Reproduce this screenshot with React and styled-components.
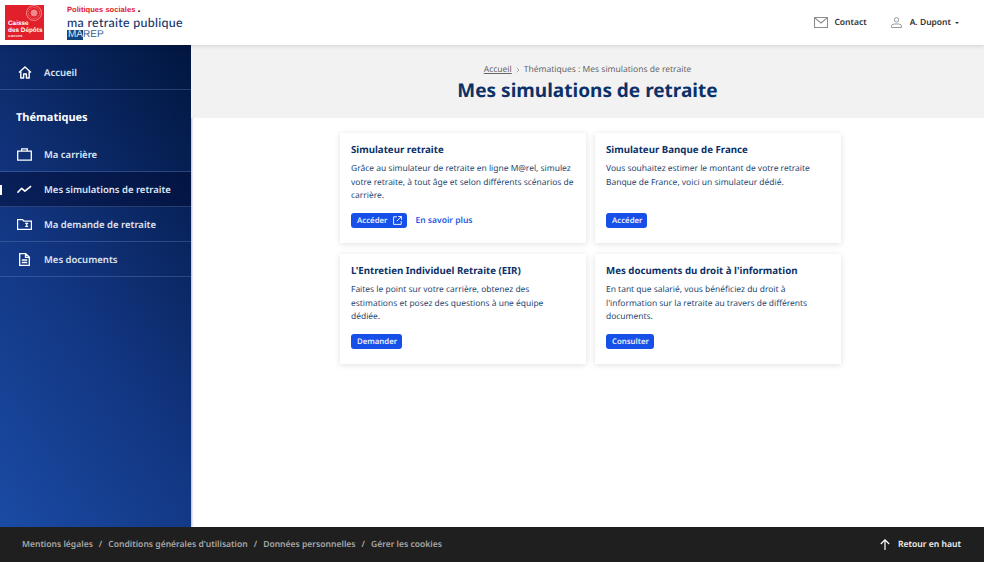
import React from "react"
import styled, { createGlobalStyle } from "styled-components"
import { ChevronRight } from "lucide-react"

const GlobalStyle = createGlobalStyle`
  html, body { margin: 0; padding: 0; height: 100%; background: #fff; }
  body { font-family: "Noto Sans", "Open Sans", sans-serif; overflow: hidden; text-rendering: geometricPrecision; }
  #root { height: 100%; }
  * { box-sizing: border-box; }
  a { text-decoration: none; }
`

const Page = styled.div`
  display: flex;
  flex-direction: column;
  height: 562px;
`

const Header = styled.header`
  position: relative;
  z-index: 2;
  display: flex;
  align-items: center;
  justify-content: space-between;
  flex: 0 0 45px;
  padding: 0 25px 0 5px;
  background: #fff;
  box-shadow: 0 1px 4px rgba(0, 0, 0, 0.14);
`

const Brand = styled.div`
  display: flex;
  align-items: center;
  gap: 23px;
`

const Logo = styled.div`
  display: flex;
  flex-direction: column;
  justify-content: flex-end;
  position: relative;
  overflow: hidden;
  width: 39px;
  height: 35px;
  padding: 0 0 2px 3px;
  background: #e2202c;
  color: #fff;
  font-family: "Liberation Sans", Arial, sans-serif;
  font-size: 6.4px;
  font-weight: 700;
  line-height: 6.4px;
`

const LogoSmall = styled.span`
  font-size: 3px;
  line-height: 4px;
  letter-spacing: 0.3px;
`

const Seal = styled.svg`
  position: absolute;
  top: 0;
  right: 0;
`

const BrandText = styled.div`
  display: flex;
  flex-direction: column;
`

const Tagline = styled.div`
  color: #e2202c;
  font-family: "Liberation Sans", Arial, sans-serif;
  font-size: 7.6px;
  font-weight: 700;
  line-height: 9px;
  &::after { content: "."; color: #111; font-size: 11px; line-height: 0; }
`

const BrandName = styled.div`
  color: #12366b;
  font-family: "Lato", sans-serif;
  font-size: 12.4px;
  font-weight: 500;
  letter-spacing: 0.3px;
  line-height: 15px;
  margin-top: 1px;
`

const Marep = styled.div`
  display: flex;
  color: #3a5c8c;
  font-family: "Liberation Sans", Arial, sans-serif;
  font-size: 10px;
  line-height: 10px;
`

const MarepBox = styled.span`
  background: #12457f;
  color: #dfe8f2;
  padding-left: 1px;
`

const HeaderActions = styled.nav`
  display: flex;
  align-items: center;
  gap: 24px;
`

const HeaderAction = styled.a`
  display: flex;
  align-items: center;
  gap: ${(p) => p.$gap}px;
  color: #333;
  font-size: 8.5px;
  font-weight: 600;
`

const Caret = styled.span`
  width: 0;
  height: 0;
  margin-left: -4px;
  border-left: 2.5px solid transparent;
  border-right: 2.5px solid transparent;
  border-top: 2.5px solid #333;
`

const Body = styled.div`
  display: flex;
  flex: 1;
  min-height: 0;
`

const Sidebar = styled.aside`
  flex: 0 0 191px;
  background: linear-gradient(55deg, #1a4ba4 0%, #123580 45%, #01163f 100%);
  box-shadow: 1px 0 2px rgba(20, 50, 120, 0.35);
`

const NavItem = styled.a`
  position: relative;
  display: flex;
  align-items: center;
  height: 35px;
  padding: 1px 0 0 17px;
  gap: 12px;
  color: #dfe5f2;
  font-size: 9.5px;
  font-weight: 600;
  border-bottom: 1px solid rgba(130, 160, 215, 0.28);
  background: ${(p) => (p.$active ? "rgba(0, 10, 50, 0.5)" : "transparent")};
  &::before {
    content: "";
    display: ${(p) => (p.$active ? "block" : "none")};
    position: absolute;
    left: 0;
    top: 13px;
    width: 2px;
    height: 10px;
    background: #fff;
  }
`

const HomeItem = styled(NavItem)`
  height: 45px;
  padding-top: 10px;
`

const NavIcon = styled.span`
  display: flex;
  justify-content: center;
  width: 15px;
`

const SectionTitle = styled.div`
  display: flex;
  align-items: center;
  height: 47px;
  padding: 8px 0 0 16px;
  color: #fff;
  font-size: 11px;
  font-weight: 700;
`

const Main = styled.main`
  display: flex;
  flex: 1;
  flex-direction: column;
  min-width: 0;
`

const Hero = styled.div`
  display: flex;
  flex-direction: column;
  align-items: center;
  flex: 0 0 73px;
  padding-top: 19px;
  background: #f2f2f2;
`

const Breadcrumb = styled.div`
  display: flex;
  align-items: center;
  gap: 2px;
  color: #666;
  font-size: 8.5px;
  line-height: 12px;
  a { color: #666; text-decoration: underline; }
`

const Title = styled.h1`
  margin: 1px 0 0;
  color: #0b3168;
  font-size: 19px;
  font-weight: 700;
  line-height: 27px;
`

const CardGrid = styled.section`
  display: grid;
  grid-template-columns: 246px 246px;
  grid-auto-rows: 110px;
  gap: 11px 9px;
  justify-content: center;
  padding: 15px 0 0 6px;
`

const Card = styled.article`
  display: flex;
  flex-direction: column;
  padding: 9px 12px 0 11px;
  background: #fff;
  box-shadow: 0 1px 6px rgba(0, 0, 0, 0.13);
`

const CardTitle = styled.h2`
  margin: 0;
  color: #0b3168;
  font-size: 9.7px;
  font-weight: 700;
  line-height: 16px;
`

const CardText = styled.p`
  flex: 0 0 41px;
  margin: 4px 0 0;
  color: #25466f;
  font-size: 8.45px;
  line-height: 13.7px;
`

const Actions = styled.div`
  display: flex;
  align-items: center;
  gap: 8px;
  margin-top: 10px;
`

const Button = styled.a`
  display: flex;
  align-items: center;
  gap: 6px;
  height: 15px;
  padding: 0 5px 0 6px;
  border-radius: 3px;
  background: #1750e8;
  color: #e8eefc;
  font-size: 7.8px;
  font-weight: 600;
`

const TextLink = styled.a`
  color: #1f5be0;
  font-size: 8.5px;
  font-weight: 600;
`

const Footer = styled.footer`
  display: flex;
  align-items: center;
  justify-content: space-between;
  flex: 0 0 35px;
  padding: 0 23px 1px 22px;
  background: #1f1f1f;
`

const FooterLinks = styled.div`
  display: flex;
  gap: 6px;
  color: #a8a8a8;
  font-size: 8.55px;
  font-weight: 600;
`

const BackToTop = styled.a`
  display: flex;
  align-items: center;
  gap: 8px;
  color: #f2f2f2;
  font-size: 8.6px;
  font-weight: 600;
`

const HomeIcon = () => (
  <svg width="14" height="13" viewBox="0 0 14 13" fill="none" stroke="#fff" strokeWidth="1.4" strokeLinejoin="round">
    <path d="M1 6.5 7 1l6 5.5M2.8 5.5V12h2.8V8h2.8v4h2.8V5.5" />
  </svg>
)

const BriefcaseIcon = () => (
  <svg width="15" height="13" viewBox="0 0 15 13" fill="none" stroke="#fff" strokeWidth="1.3">
    <path d="M.7 3.2h13.6v9H.7zM4.7 3V.9h5.6V3" />
  </svg>
)

const TrendIcon = () => (
  <svg width="16" height="9" viewBox="0 0 16 9" fill="none" stroke="#fff" strokeWidth="1.7" strokeLinejoin="round">
    <path d="M.5 7.8 5 3.2l3.4 3L15 1" />
  </svg>
)

const FolderIcon = () => (
  <svg width="15" height="11" viewBox="0 0 15 11" fill="none" stroke="#fff" strokeWidth="1.2">
    <path d="M.6.6h5l1.3 1.5h7.5v8.3H.6zM8.2 4.4h3M9.7 4.4v2.8M8.2 7.4h3" />
  </svg>
)

const DocIcon = () => (
  <svg width="11" height="13" viewBox="0 0 11 13" fill="none" stroke="#fff" strokeWidth="1.3">
    <path d="M.7.7h6l3.6 3.4v8.2H.7zM6.5.8v3.5h3.7M2.8 7h5.4M2.8 9.5h5.4" />
  </svg>
)

const MailIcon = () => (
  <svg width="14" height="11" viewBox="0 0 14 11" fill="none" stroke="#8c8c8c" strokeWidth="1.1">
    <path d="M.5.5h13v10H.5zM.8.8 7 6l6.2-5.2" />
  </svg>
)

const UserIcon = () => (
  <svg width="11" height="11" viewBox="0 0 11 11" fill="none" stroke="#8c8c8c" strokeWidth="0.9">
    <circle cx="5.5" cy="2.8" r="2.2" />
    <path d="M.6 10.5V8.6c0-1 1.8-1.7 4.9-1.7s4.9.7 4.9 1.7v1.9z" />
  </svg>
)

const ExternalIcon = () => (
  <svg width="9" height="9" viewBox="0 0 9 9" fill="none" stroke="#fff" strokeWidth="0.9">
    <path d="M4 .8H.6v7.6h7.6V5M5.2.5h3.3v3.3M8.3.7 3.8 5.2" />
  </svg>
)

const ArrowUpIcon = () => (
  <svg width="10" height="11" viewBox="0 0 10 11" fill="none" stroke="#fff" strokeWidth="1.2">
    <path d="M5 11V1M.8 5 5 .8 9.2 5" />
  </svg>
)

const navItems = [
  { label: "Ma carrière", icon: <BriefcaseIcon /> },
  { label: "Mes simulations de retraite", icon: <TrendIcon />, active: true },
  { label: "Ma demande de retraite", icon: <FolderIcon /> },
  { label: "Mes documents", icon: <DocIcon /> },
]

const cards = [
  {
    title: "Simulateur retraite",
    text: "Grâce au simulateur de retraite en ligne M@rel, simulez votre retraite, à tout âge et selon différents scénarios de carrière.",
    action: "Accéder",
    external: true,
    more: "En savoir plus",
  },
  {
    title: "Simulateur Banque de France",
    text: "Vous souhaitez estimer le montant de votre retraite Banque de France, voici un simulateur dédié.",
    action: "Accéder",
  },
  {
    title: "L'Entretien Individuel Retraite (EIR)",
    text: "Faites le point sur votre carrière, obtenez des estimations et posez des questions à une équipe dédiée.",
    action: "Demander",
  },
  {
    title: "Mes documents du droit à l'information",
    text: "En tant que salarié, vous bénéficiez du droit à l'information sur la retraite au travers de différents documents.",
    action: "Consulter",
  },
]

const footerLinks = [
  "Mentions légales",
  "/",
  "Conditions générales d'utilisation",
  "/",
  "Données personnelles",
  "/",
  "Gérer les cookies",
]

export default function App() {
  return (
    <Page>
      <GlobalStyle />
      <Header>
        <Brand>
          <Logo>
            <Seal width="24" height="20" viewBox="0 0 24 20" fill="none" stroke="#f08a8a" strokeWidth="1">
              <circle cx="14" cy="8" r="7.5" />
              <circle cx="14" cy="8" r="5.5" strokeDasharray="1 1" />
              <circle cx="14" cy="8" r="3" fill="#f08a8a" />
            </Seal>
            <span>Caisse</span>
            <span>des Dépôts</span>
            <LogoSmall>GROUPE</LogoSmall>
          </Logo>
          <BrandText>
            <Tagline>Politiques sociales </Tagline>
            <BrandName>ma retraite publique</BrandName>
            <Marep>
              <MarepBox>MA</MarepBox>
              <span>REP</span>
            </Marep>
          </BrandText>
        </Brand>
        <HeaderActions>
          <HeaderAction $gap={6}>
            <MailIcon />
            Contact
          </HeaderAction>
          <HeaderAction $gap={8}>
            <UserIcon />
            A. Dupont
            <Caret />
          </HeaderAction>
        </HeaderActions>
      </Header>
      <Body>
        <Sidebar>
          <HomeItem>
            <NavIcon>
              <HomeIcon />
            </NavIcon>
            Accueil
          </HomeItem>
          <SectionTitle>Thématiques</SectionTitle>
          {navItems.map((item) => (
            <NavItem key={item.label} $active={item.active}>
              <NavIcon>{item.icon}</NavIcon>
              {item.label}
            </NavItem>
          ))}
        </Sidebar>
        <Main>
          <Hero>
            <Breadcrumb>
              <a>Accueil</a>
              <ChevronRight size={8} strokeWidth={1.5} />
              <span>Thématiques : Mes simulations de retraite</span>
            </Breadcrumb>
            <Title>Mes simulations de retraite</Title>
          </Hero>
          <CardGrid>
            {cards.map((card) => (
              <Card key={card.title}>
                <CardTitle>{card.title}</CardTitle>
                <CardText>{card.text}</CardText>
                <Actions>
                  <Button>
                    {card.action}
                    {card.external && <ExternalIcon />}
                  </Button>
                  {card.more && <TextLink>{card.more}</TextLink>}
                </Actions>
              </Card>
            ))}
          </CardGrid>
        </Main>
      </Body>
      <Footer>
        <FooterLinks>
          {footerLinks.map((link, i) => (
            <span key={i}>{link}</span>
          ))}
        </FooterLinks>
        <BackToTop>
          <ArrowUpIcon />
          Retour en haut
        </BackToTop>
      </Footer>
    </Page>
  )
}
